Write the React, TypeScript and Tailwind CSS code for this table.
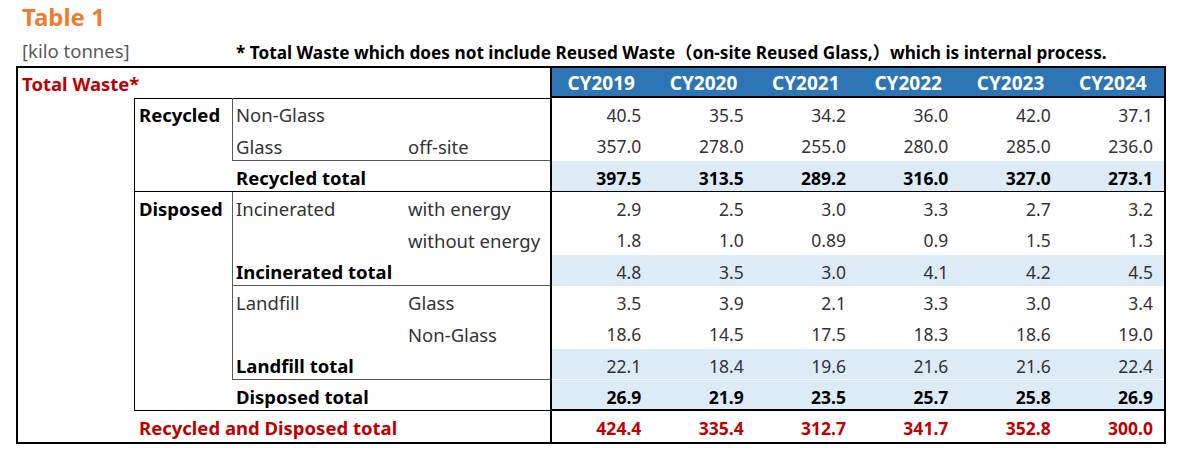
import React from "react";

const COLS = ["col-start-5", "col-start-6", "col-start-7", "col-start-8", "col-start-9", "col-start-10"];
const ROWS = [
  "row-start-1",
  "row-start-2",
  "row-start-3",
  "row-start-4",
  "row-start-5",
  "row-start-6",
  "row-start-7",
  "row-start-8",
  "row-start-9",
  "row-start-10",
  "row-start-11",
  "row-start-12",
];

type Row = {
  vals: string[];
  kind: "normal" | "blue" | "blueBold" | "red";
  extra?: string;
};

const rows: Row[] = [
  { vals: ["40.5", "35.5", "34.2", "36.0", "42.0", "37.1"], kind: "normal" },
  { vals: ["357.0", "278.0", "255.0", "280.0", "285.0", "236.0"], kind: "normal" },
  { vals: ["397.5", "313.5", "289.2", "316.0", "327.0", "273.1"], kind: "blueBold", extra: "border-b border-black" },
  { vals: ["2.9", "2.5", "3.0", "3.3", "2.7", "3.2"], kind: "normal" },
  { vals: ["1.8", "1.0", "0.89", "0.9", "1.5", "1.3"], kind: "normal" },
  { vals: ["4.8", "3.5", "3.0", "4.1", "4.2", "4.5"], kind: "blue" },
  { vals: ["3.5", "3.9", "2.1", "3.3", "3.0", "3.4"], kind: "normal" },
  { vals: ["18.6", "14.5", "17.5", "18.3", "18.6", "19.0"], kind: "normal" },
  { vals: ["22.1", "18.4", "19.6", "21.6", "21.6", "22.4"], kind: "blue", extra: "border-b border-white" },
  { vals: ["26.9", "21.9", "23.5", "25.7", "25.8", "26.9"], kind: "blueBold", extra: "border-b-2 border-black" },
  { vals: ["424.4", "335.4", "312.7", "341.7", "352.8", "300.0"], kind: "red" },
];

const years = ["CY2019", "CY2020", "CY2021", "CY2022", "CY2023", "CY2024"];

const lab = "flex items-center pt-[3px] z-10 text-[18.5px]";

export default function App() {
  const font = { fontFamily: '"Noto Sans", "Noto Sans CJK JP", sans-serif' };
  return (
    <div className="w-[1200px] h-[465px] bg-white overflow-hidden" style={font}>
      <div className="pl-[22px] h-[36px] text-[24px] leading-[34px] font-bold text-[#ED7D31]">Table 1</div>
      <div className="flex items-center h-[30px] pl-[22px]">
        <div className="w-[214px] text-[18.5px] text-[#595959]">[kilo tonnes]</div>
        <div className="text-[17.2px] font-bold text-black pt-[3px] whitespace-nowrap">
          * Total Waste which does not include Reused Waste（on-site Reused Glass,）which is internal process.
        </div>
      </div>
      <div className="ml-[16px] w-[1150px] border-2 border-black grid grid-cols-[116px_98px_176px_142px_repeat(6,1fr)] grid-rows-[30px_31px_32px_31px_31px_32px_31px_31px_32px_31px_31px_31px] text-[#333]">
        {/* header */}
        <div className="col-start-1 col-span-4 row-start-1 flex items-center pl-[4px] pt-[2px] font-bold text-[#C00000] text-[18.5px]">
          Total Waste*
        </div>
        <div className="col-start-5 col-span-6 row-start-1 bg-[#2E75B6] border-b-2 border-black" />
        {years.map((y, i) => (
          <div
            key={y}
            className={`${COLS[i]} row-start-1 flex items-center justify-center font-bold text-white text-[19px] z-10`}
          >
            {y}
          </div>
        ))}

        {/* data backgrounds */}
        {rows.map((r, ri) =>
          r.kind === "blue" || r.kind === "blueBold" || r.extra ? (
            <div
              key={"bg" + ri}
              className={`col-start-5 col-span-6 ${ROWS[ri + 1]} ${
                r.kind === "blue" || r.kind === "blueBold" ? "bg-[#DDEBF7]" : ""
              } ${r.extra ?? ""}`}
            />
          ) : null
        )}

        {/* data values */}
        {rows.map((r, ri) =>
          r.vals.map((v, ci) => (
            <div
              key={ri + "-" + ci}
              className={`${COLS[ci]} ${ROWS[ri + 1]} flex items-center justify-end pt-[3px] pr-[11px] z-10 text-[17.5px] ${
                r.kind === "blueBold"
                  ? "font-bold text-black"
                  : r.kind === "red"
                  ? "font-bold text-[#C00000]"
                  : "text-[#333]"
              }`}
            >
              {v}
            </div>
          ))
        )}

        {/* boxes */}
        <div className="col-start-2 col-span-3 row-start-2 row-span-3 border-l border-t border-b border-black" />
        <div className="col-start-3 col-span-2 row-start-2 row-span-2 border-l border-b border-[#595959]" />
        <div className="col-start-2 col-span-3 row-start-5 row-span-7 border-l border-b border-black" />
        <div className="col-start-3 col-span-2 row-start-5 row-span-3 border-l border-b border-[#595959]" />
        <div className="col-start-3 col-span-2 row-start-8 row-span-3 border-l border-b border-[#595959]" />
        <div className="col-start-5 col-span-6 row-start-1 row-span-12 border-l-2 border-black z-20" />

        {/* labels */}
        <div className={`col-start-2 row-start-2 pl-[5px] font-bold text-black ${lab}`}>Recycled</div>
        <div className={`col-start-3 row-start-2 pl-[4px] ${lab}`}>Non-Glass</div>
        <div className={`col-start-3 row-start-3 pl-[4px] ${lab}`}>Glass</div>
        <div className={`col-start-4 row-start-3 ${lab}`}>off-site</div>
        <div className={`col-start-3 col-span-2 row-start-4 pl-[4px] font-bold text-black ${lab}`}>Recycled total</div>

        <div className={`col-start-2 row-start-5 pl-[5px] font-bold text-black ${lab}`}>Disposed</div>
        <div className={`col-start-3 row-start-5 pl-[4px] ${lab}`}>Incinerated</div>
        <div className={`col-start-4 row-start-5 ${lab}`}>with energy</div>
        <div className={`col-start-4 row-start-6 ${lab}`}>without energy</div>
        <div className={`col-start-3 col-span-2 row-start-7 pl-[4px] font-bold text-black ${lab}`}>
          Incinerated total
        </div>
        <div className={`col-start-3 row-start-8 pl-[4px] ${lab}`}>Landfill</div>
        <div className={`col-start-4 row-start-8 ${lab}`}>Glass</div>
        <div className={`col-start-4 row-start-9 ${lab}`}>Non-Glass</div>
        <div className={`col-start-3 col-span-2 row-start-10 pl-[4px] font-bold text-black ${lab}`}>Landfill total</div>
        <div className={`col-start-3 col-span-2 row-start-11 pl-[4px] font-bold text-black ${lab}`}>Disposed total</div>
        <div className={`col-start-2 col-span-3 row-start-12 pl-[5px] font-bold text-[#C00000] ${lab}`}>
          Recycled and Disposed total
        </div>
      </div>
    </div>
  );
}
